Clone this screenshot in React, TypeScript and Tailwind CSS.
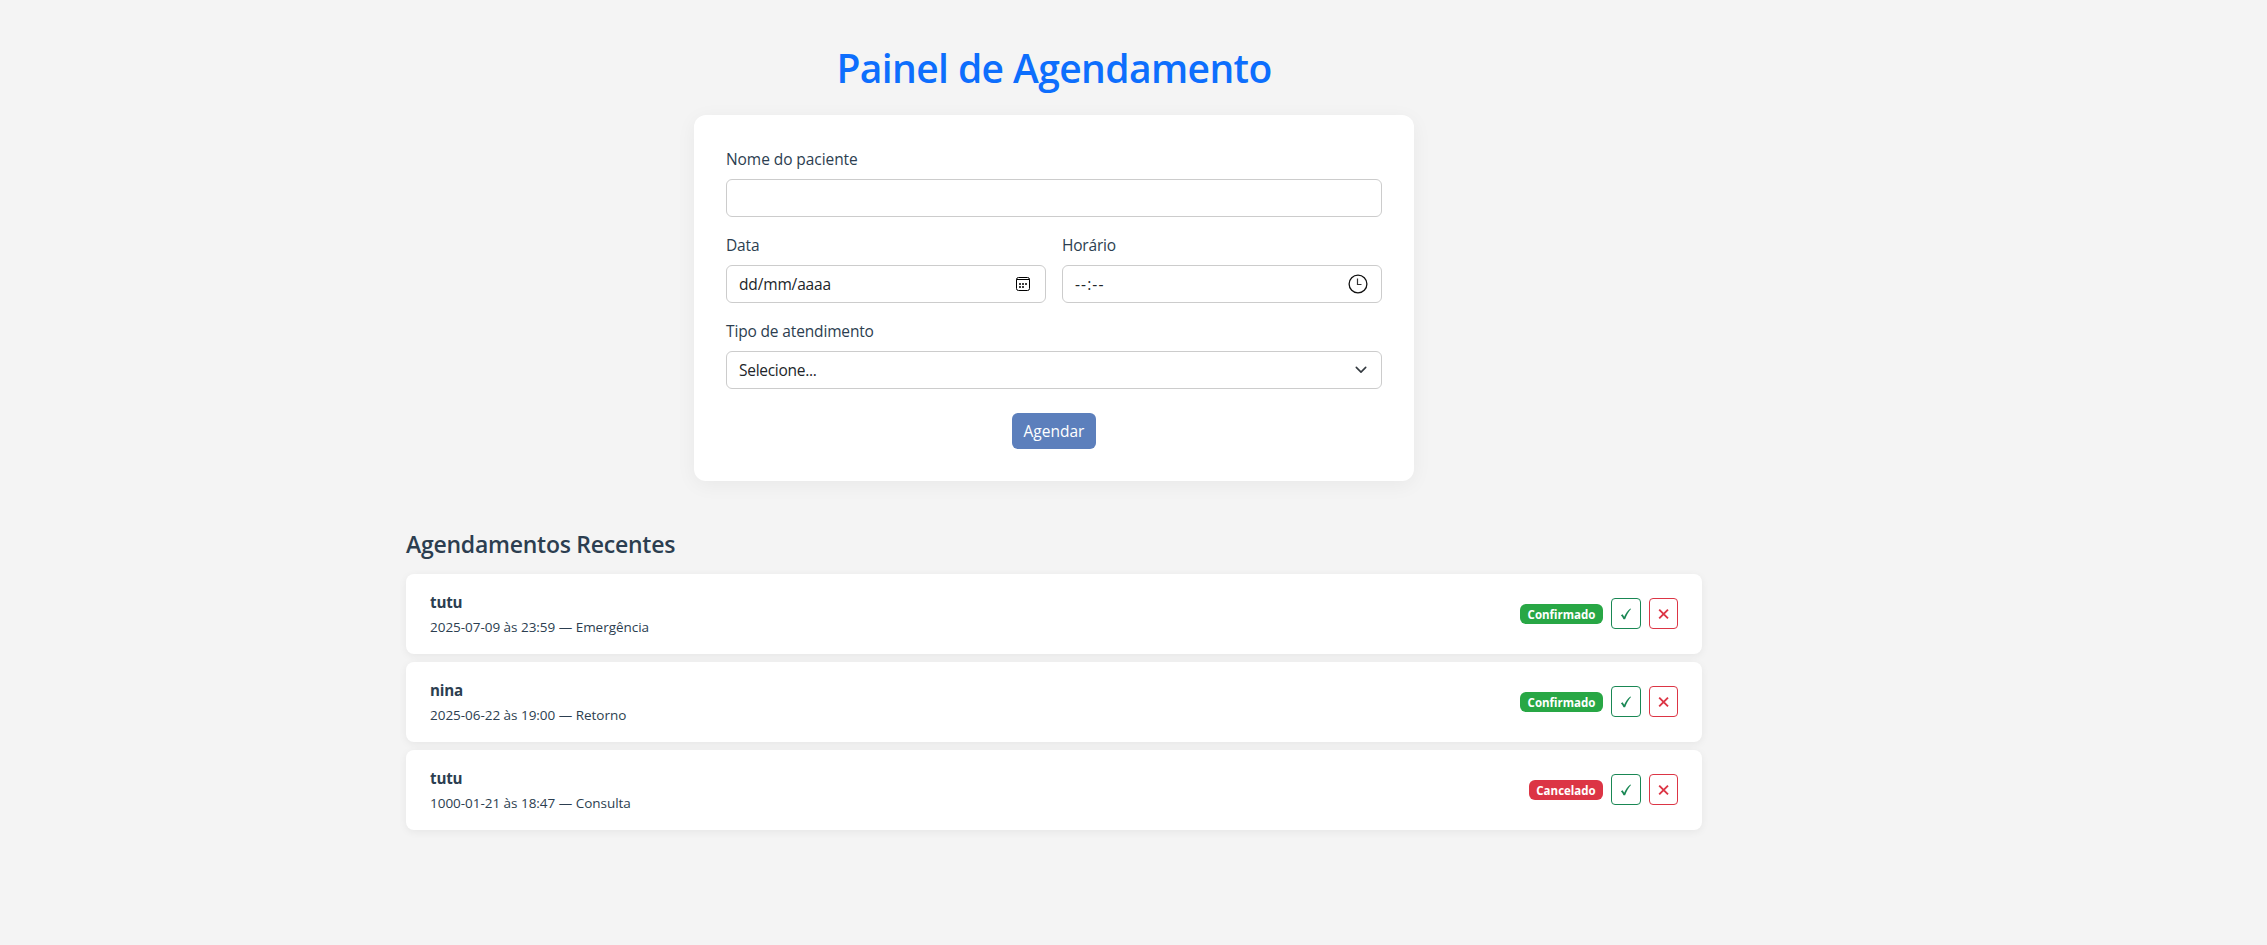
import type { ReactNode } from 'react';

type Status = 'Confirmado' | 'Cancelado';

interface Appointment {
  name: string;
  details: string;
  status: Status;
}

const appointments: Appointment[] = [
  { name: 'tutu', details: '2025-07-09 às 23:59 — Emergência', status: 'Confirmado' },
  { name: 'nina', details: '2025-06-22 às 19:00 — Retorno', status: 'Confirmado' },
  { name: 'tutu', details: '1000-01-21 às 18:47 — Consulta', status: 'Cancelado' },
];

const statusStyles: Record<Status, string> = {
  Confirmado: 'w-[83px] bg-[#28a745]',
  Cancelado: 'w-[74px] bg-[#dc3545]',
};

function Label({ children, className = '' }: { children: ReactNode; className?: string }) {
  return <div className={`mb-2 h-6 leading-[25px] ${className}`}>{children}</div>;
}

function Box({ children }: { children?: ReactNode }) {
  return (
    <div className="flex h-[38px] items-center justify-between rounded-md border border-[#cccccc] bg-white px-3 leading-6 text-[#212529]">
      {children}
    </div>
  );
}

function CalendarIcon() {
  return (
    <svg width="14" height="14" viewBox="0 0 14 14" className="mr-[3px]" fill="none" stroke="#000">
      <rect x="0.5" y="0.5" width="13" height="13" rx="2" />
      <path d="M0.5 2.5h13" />
      <path d="M3 7h2M6 7h2M9 7h2M3 10h2M6 10h2" strokeWidth="1.6" />
    </svg>
  );
}

function ClockIcon() {
  return (
    <svg width="20" height="20" viewBox="0 0 20 20" className="mr-[1.5px] mb-[1px]" fill="none" stroke="#111">
      <circle cx="10" cy="10" r="8.9" strokeWidth="1.3" />
      <path d="M9.5 4.5v6h4" stroke="#333" strokeWidth="1.2" />
    </svg>
  );
}

function ChevronIcon() {
  return (
    <svg width="16" height="12" viewBox="0 0 16 12" fill="none" stroke="#343a40" strokeWidth="1.6" strokeLinecap="round" strokeLinejoin="round">
      <path d="M3.3 3.4l4.7 4.7 4.7-4.7" />
    </svg>
  );
}

function CheckIcon() {
  return (
    <svg width="12" height="12" viewBox="0 0 12 12" fill="#198754">
      <path d="M0.9 7.2L2.6 6.2L4.2 8.7C5.6 5.4 7.6 2.5 10.3 0.4L11 0.9C8.4 3.8 6.5 7.2 5.1 11.2H3.5C2.8 9.7 1.9 8.3 0.9 7.2Z" />
    </svg>
  );
}

function CrossIcon() {
  return (
    <svg width="12" height="12" viewBox="0 0 12 12" fill="none" stroke="#dc3545" strokeWidth="1.9">
      <path d="M1.2 1.6l8.8 8.8M10 1.6l-8.8 8.8" />
    </svg>
  );
}

function AppointmentRow({ name, details, status }: Appointment) {
  return (
    <li className="flex h-20 items-start justify-between rounded-lg bg-white px-6 py-4 shadow-[0_2px_8px_rgba(0,0,0,0.06)]">
      <div>
        <div className="h-6 text-[15.2px] leading-[25px] font-bold tracking-[-0.2px]">{name}</div>
        <div className="h-6 text-[13.5px] leading-[27px] tracking-[-0.03px]">{details}</div>
      </div>
      <div className="mt-2 flex items-start gap-2">
        <span className={`mt-1.5 flex h-5 items-center justify-center rounded-md text-[11.5px] leading-5 font-bold text-white ${statusStyles[status]}`}>
          <span className="pt-px">{status}</span>
        </span>
        <button type="button" aria-label="Confirmar" className="flex h-[31px] w-[30px] items-center justify-center rounded-[4px] border border-[#198754]">
          <CheckIcon />
        </button>
        <button type="button" aria-label="Cancelar" className="flex h-[31px] w-[29px] items-center justify-center rounded-[4px] border border-[#dc3545]">
          <CrossIcon />
        </button>
      </div>
    </li>
  );
}

export default function App() {
  return (
    <div className="min-h-[945px] w-full bg-[#f4f4f4] font-['Open_Sans','Noto_Sans',sans-serif] text-[15.5px] text-[#2c3e50]">
      <main className="flex w-[2108px] flex-col items-center pt-[43px]">
        <h1 className="mb-6 h-12 text-[39px] leading-[50px] font-semibold tracking-[-0.6px] text-[#0d6efd]">
          Painel de Agendamento
        </h1>

        <form className="flex w-[720px] flex-col rounded-xl bg-white p-8 shadow-[0_4px_20px_rgba(0,0,0,0.05)]">
          <Label className="tracking-[-0.07px]">Nome do paciente</Label>
          <Box />
          <div className="mt-4 grid grid-cols-2 gap-4">
            <div>
              <Label className="tracking-[-0.15px]">Data</Label>
              <Box>
                <span className="tracking-[-0.15px]">dd/mm/aaaa</span>
                <CalendarIcon />
              </Box>
            </div>
            <div>
              <Label className="tracking-[-0.2px]">Horário</Label>
              <Box>
                <span className="tracking-[1.1px]">--:--</span>
                <ClockIcon />
              </Box>
            </div>
          </div>
          <Label className="mt-4 tracking-[-0.15px]">Tipo de atendimento</Label>
          <Box>
            <span className="tracking-[-0.28px]">Selecione...</span>
            <ChevronIcon />
          </Box>
          <button type="button" className="mt-6 h-9 w-[84px] self-center rounded-md bg-[#5c7fbc] leading-[37px] text-white">
            Agendar
          </button>
        </form>

        <section className="mt-12 w-[1296px]">
          <h2 className="mb-4 h-[29px] text-[23px] leading-[31px] font-semibold tracking-[-0.25px]">
            Agendamentos Recentes
          </h2>
          <ul className="flex flex-col gap-2">
            {appointments.map((item) => (
              <AppointmentRow key={item.details} {...item} />
            ))}
          </ul>
        </section>
      </main>
    </div>
  );
}
